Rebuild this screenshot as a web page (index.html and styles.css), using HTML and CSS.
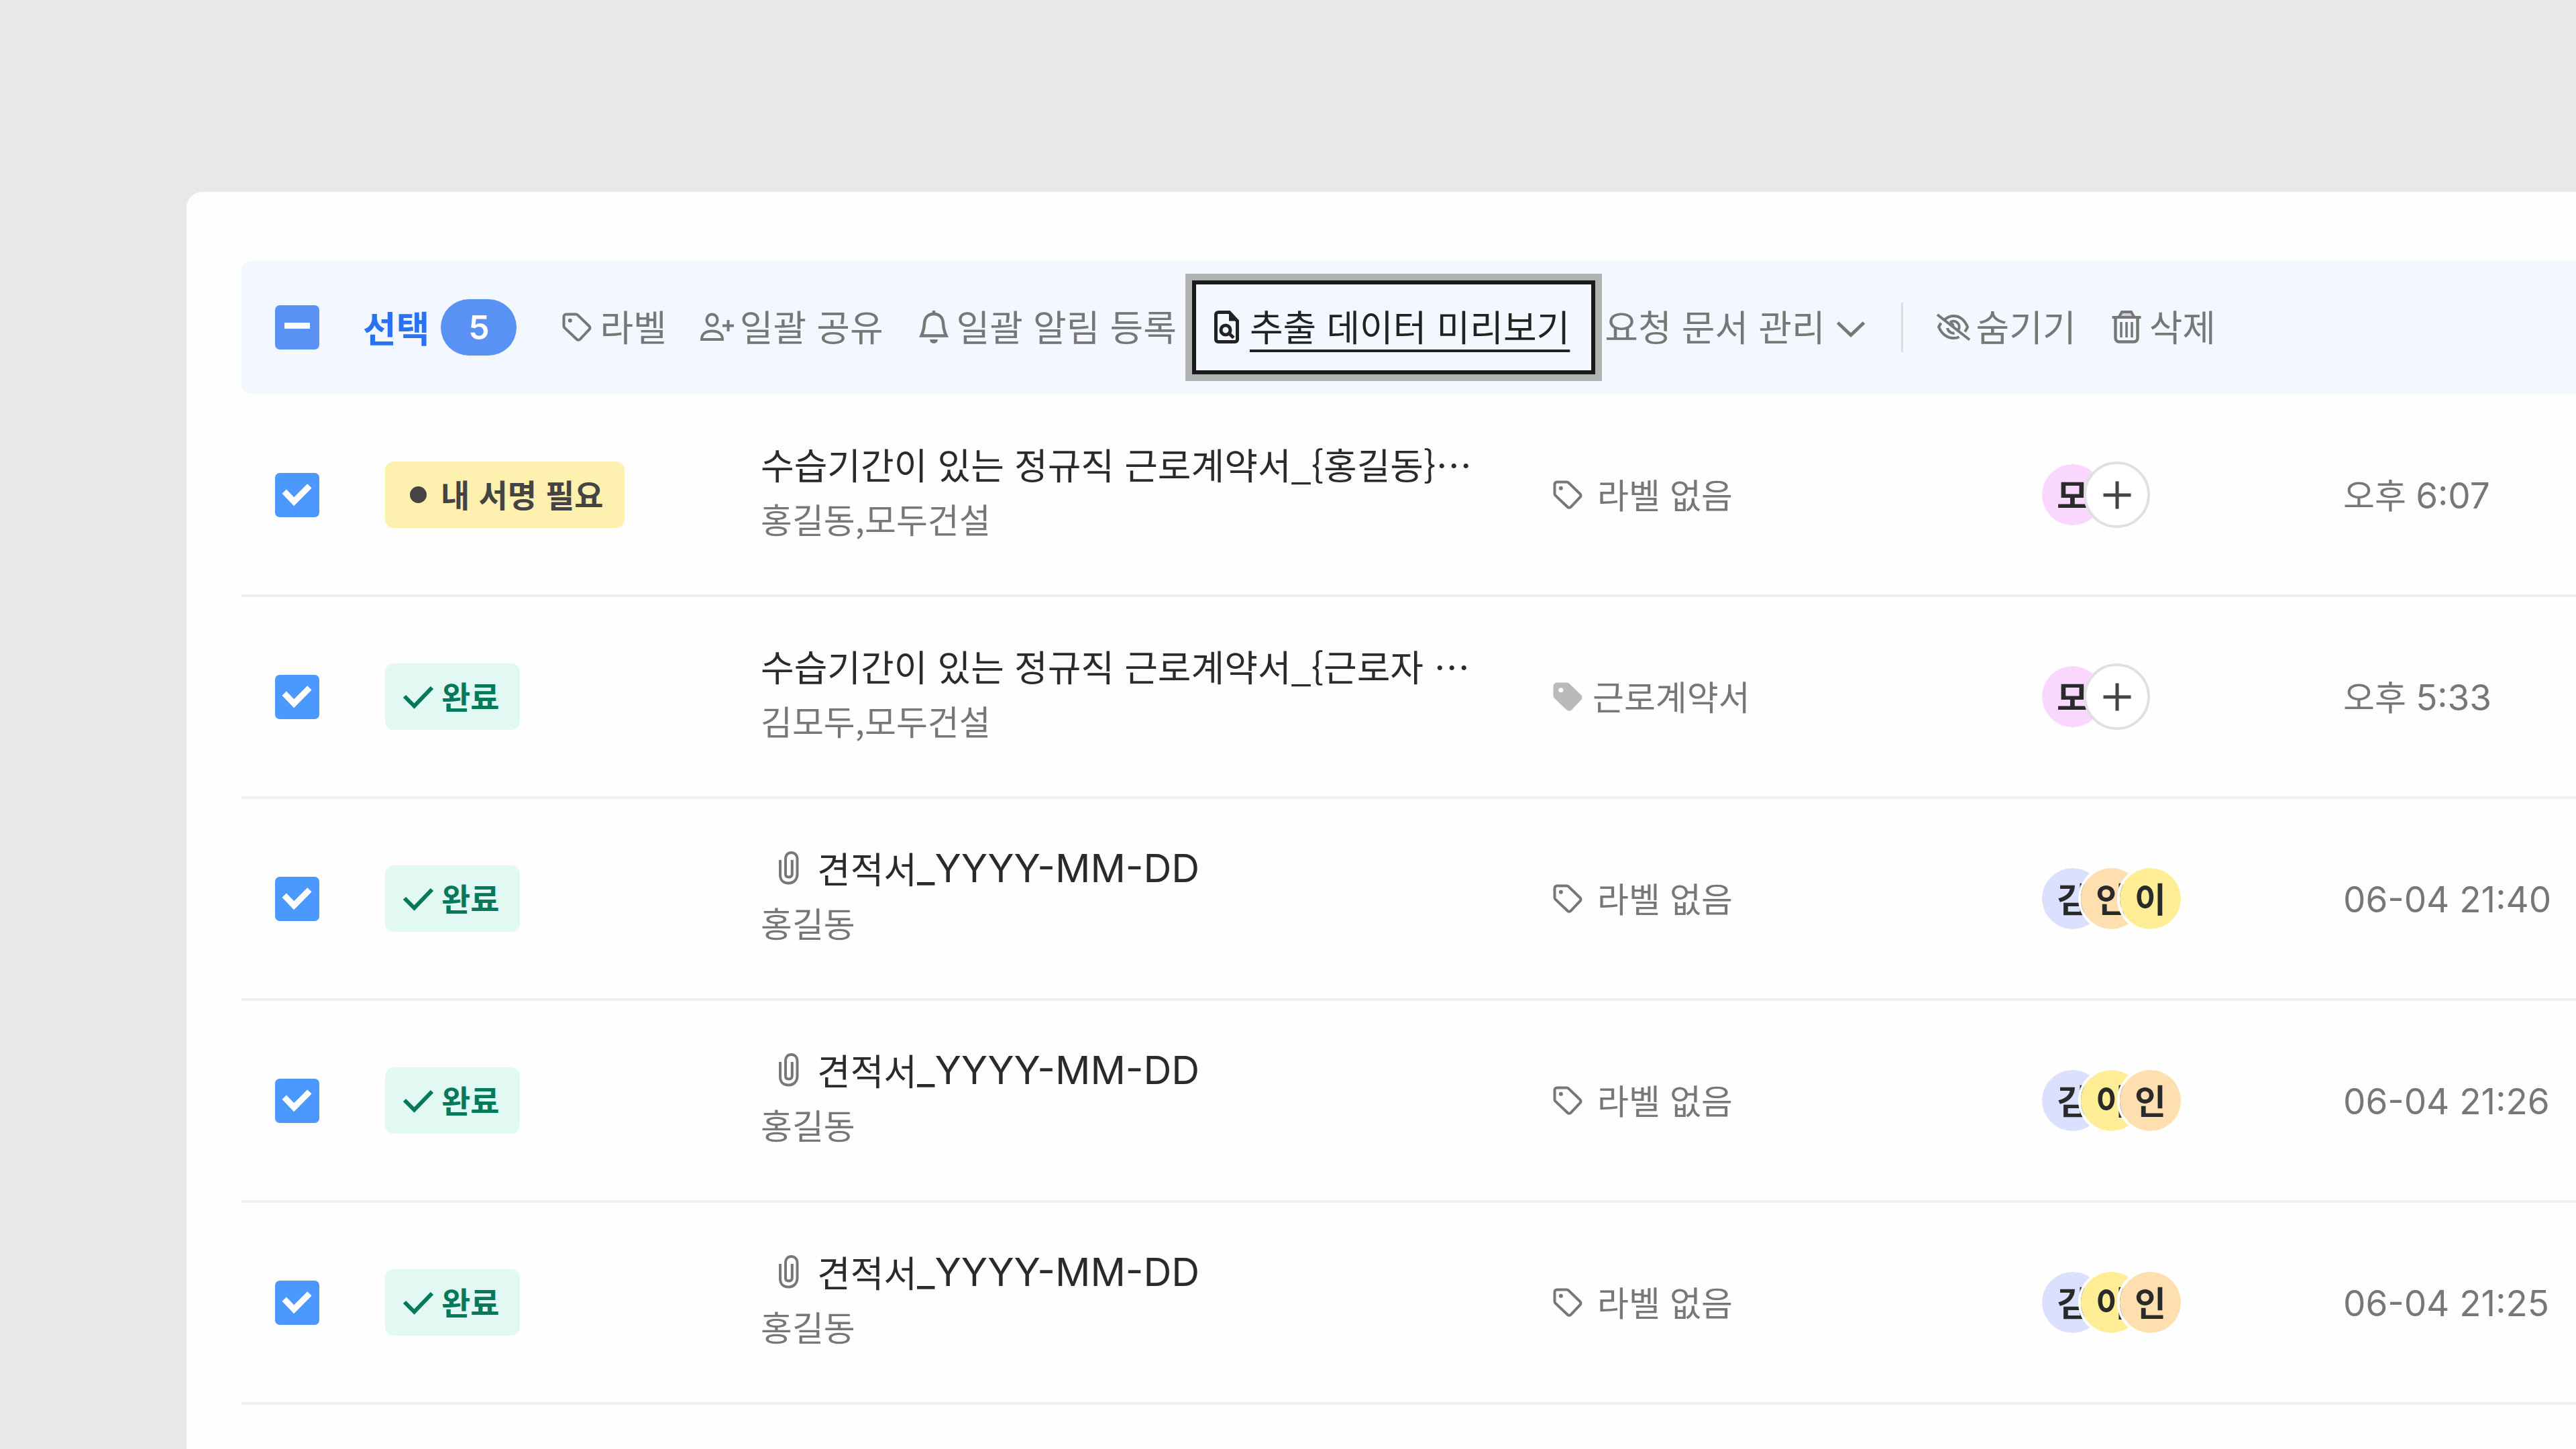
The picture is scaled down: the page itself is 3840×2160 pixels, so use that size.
FILE: index.html
```html
<!DOCTYPE html>
<html lang="ko">
<head>
    <meta charset="UTF-8">
    <meta name="viewport" content="width=device-width, initial-scale=1.0">
    <title>문서 목록</title>
    <link rel="stylesheet" href="styles.css">
</head>
<body>
    <svg class="sprite" aria-hidden="true">
        <symbol id="tag" viewBox="0 0 50 50">
            <path d="M5.5 9A3.5 3.5 0 0 1 9 5.500H23.500C24.500 5.500 25.500 5.900 26.200 6.600L43.400 23.200C44.800 24.600 44.800 26.700 43.400 28.100L29.500 42.800C28.100 44.200 26.100 44.200 24.700 42.800L6.600 25.600C5.900 24.900 5.500 23.900 5.500 22.900Z" fill="none" stroke="currentColor" stroke-width="4"/>
            <circle cx="14.800" cy="14.800" r="3" fill="currentColor"/>
        </symbol>
        <symbol id="tag-fill" viewBox="0 0 50 50">
            <path d="M5.5 9A3.5 3.5 0 0 1 9 5.500H23.500C24.500 5.500 25.500 5.900 26.200 6.600L43.400 23.200C44.800 24.600 44.800 26.700 43.400 28.100L29.500 42.800C28.100 44.200 26.100 44.200 24.700 42.800L6.600 25.600C5.900 24.900 5.500 23.900 5.500 22.900Z" fill="currentColor" stroke="currentColor" stroke-width="4"/>
            <circle cx="14.800" cy="14.800" r="3.500" fill="#fff"/>
        </symbol>
        <symbol id="user-plus" viewBox="0 0 50 50">
            <g fill="none" stroke="currentColor" stroke-width="4">
                <ellipse cx="17.500" cy="14" rx="8" ry="8.500"/>
                <path d="M2 43C2 35 7.500 30.500 17.500 30.500S33 35 33 43Z"/>
                <path d="M41.500 14V31M33 22.500H50"/>
            </g>
        </symbol>
        <symbol id="bell" viewBox="0 0 50 50">
            <path d="M25 0V5M25 5C16 5 11.500 11 11 19C10.500 28 9.500 31 6.500 37.500H43.500C40.500 31 39.500 28 39 19C38.500 11 34 5 25 5Z" fill="none" stroke="currentColor" stroke-width="4.500"/>
            <path d="M19 43H31A6 6 0 0 1 19 43Z" fill="currentColor"/>
        </symbol>
        <symbol id="doc-search" viewBox="0 0 50 50">
            <path d="M11.500 2.500H28.500L40.500 15.500V43A3.500 3.500 0 0 1 37 46.500H12A3.500 3.500 0 0 1 8.500 43V6A3.500 3.500 0 0 1 12 2.500Z" fill="none" stroke="currentColor" stroke-width="5"/>
            <path d="M28 2V15.500H42Z" fill="currentColor"/>
            <circle cx="23" cy="29" r="7" fill="none" stroke="currentColor" stroke-width="5"/>
            <path d="M27 33L35 40.500" fill="none" stroke="currentColor" stroke-width="5"/>
        </symbol>
        <symbol id="chevron" viewBox="0 0 50 50">
            <path d="M5.500 18L25 36.500L44.500 18" fill="none" stroke="currentColor" stroke-width="5"/>
        </symbol>
        <symbol id="eye-off" viewBox="0 0 50 50">
            <g fill="none" stroke="currentColor" stroke-width="4">
                <path d="M12 13.500C16 10 20 8 25 8C35 8 42 15 46 24.500C45 27 43.500 29.500 42 31.500"/>
                <path d="M6.500 18.500C5 20.500 4 22.500 3 24.500C7 34 15 41 25 41C28 41 31 40.500 33.500 39.200"/>
                <path d="M20 17.500A8.500 8.500 0 0 1 32.500 28.500"/>
                <path d="M16 26A9 9 0 0 0 26.500 33.500"/>
                <path d="M1 6L49 43.500"/>
            </g>
            <path d="M19 17.500L25 18.500L27 24L22 21Z" fill="currentColor"/>
        </symbol>
        <symbol id="trash" viewBox="0 0 50 50">
            <path d="M14 9L18 2H32L36 9" fill="#ccd0d8" stroke="currentColor" stroke-width="4"/>
            <path d="M3.500 10H46.500" stroke="currentColor" stroke-width="4"/>
            <path d="M8.500 10V41A5.500 5.500 0 0 0 14 46.500H36A5.500 5.500 0 0 0 41.500 41V10" fill="none" stroke="currentColor" stroke-width="4.500"/>
            <path d="M17 17V40M25 17V40M33 17V40" stroke="currentColor" stroke-width="3.500"/>
        </symbol>
        <symbol id="check" viewBox="0 0 50 50">
            <path d="M4 24L18.500 38.500L45 11" fill="none" stroke="currentColor" stroke-width="6"/>
        </symbol>
        <symbol id="clip" viewBox="0 0 30 50">
            <path d="M2 13V35C2 43 7 47.500 14.500 47.500S27.500 42 27.500 34V12C27.500 5.500 23.500 2 18.500 2S10 5.500 10 12V34C10 37 12 38.500 14.800 38.500S19.800 37 19.800 34V13" fill="none" stroke="currentColor" stroke-width="4"/>
        </symbol>
        <symbol id="plus" viewBox="0 0 50 50">
            <path d="M25 4.500V45.500M4.500 25H45.500" stroke="currentColor" stroke-width="5"/>
        </symbol>
    </svg>

    <main class="card">
        <div class="toolbar" role="toolbar" aria-label="선택한 문서 작업">
            <input type="checkbox" class="chk partial" id="all" aria-label="전체 선택">
            <label class="selected" for="all">선택 <span class="count">5</span></label>
            <div class="actions">
                <button class="action"><svg class="icon"><use href="#tag"/></svg>라벨</button>
                <button class="action"><svg class="icon"><use href="#user-plus"/></svg>일괄 공유</button>
                <button class="action"><svg class="icon"><use href="#bell"/></svg>일괄 알림 등록</button>
                <button class="action focused"><svg class="icon"><use href="#doc-search"/></svg><span class="underlined">추출 데이터 미리보기</span></button>
                <button class="action menu">요청 문서 관리<svg class="icon"><use href="#chevron"/></svg></button>
                <span class="divider"></span>
                <button class="action"><svg class="icon"><use href="#eye-off"/></svg>숨기기</button>
                <button class="action"><svg class="icon"><use href="#trash"/></svg>삭제</button>
            </div>
        </div>

        <table class="docs">
            <colgroup>
                <col class="col-check">
                <col class="col-status">
                <col class="col-title">
                <col class="col-label">
                <col class="col-people">
                <col class="col-date">
            </colgroup>
            <tbody>
                <tr>
                    <td class="check"><input type="checkbox" class="chk" checked aria-label="문서 선택"></td>
                    <td><span class="status need"><span class="dot"></span>내 서명 필요</span></td>
                    <td>
                        <a href="#" class="title">수습기간이 있는 정규직 근로계약서_{홍길동}…</a>
                        <p class="people">홍길동,모두건설</p>
                    </td>
                    <td><span class="label none"><svg class="icon"><use href="#tag"/></svg>라벨 없음</span></td>
                    <td><div class="avatars"><span class="avatar pink">모</span><button class="add" aria-label="참여자 추가"><svg class="icon"><use href="#plus"/></svg></button></div></td>
                    <td class="date">오후 <span class="num">6:07</span></td>
                </tr>
                <tr>
                    <td class="check"><input type="checkbox" class="chk" checked aria-label="문서 선택"></td>
                    <td><span class="status done"><svg class="icon"><use href="#check"/></svg>완료</span></td>
                    <td>
                        <a href="#" class="title">수습기간이 있는 정규직 근로계약서_{근로자 …</a>
                        <p class="people">김모두,모두건설</p>
                    </td>
                    <td><span class="label"><svg class="icon"><use href="#tag-fill"/></svg>근로계약서</span></td>
                    <td><div class="avatars"><span class="avatar pink">모</span><button class="add" aria-label="참여자 추가"><svg class="icon"><use href="#plus"/></svg></button></div></td>
                    <td class="date">오후 <span class="num">5:33</span></td>
                </tr>
                <tr>
                    <td class="check"><input type="checkbox" class="chk" checked aria-label="문서 선택"></td>
                    <td><span class="status done"><svg class="icon"><use href="#check"/></svg>완료</span></td>
                    <td>
                        <a href="#" class="title"><svg class="clip"><use href="#clip"/></svg>견적서<span class="latin">_YYYY-MM-DD</span></a>
                        <p class="people">홍길동</p>
                    </td>
                    <td><span class="label none"><svg class="icon"><use href="#tag"/></svg>라벨 없음</span></td>
                    <td><div class="avatars"><span class="avatar blue">김</span><span class="avatar orange">인</span><span class="avatar yellow">이</span></div></td>
                    <td class="date"><span class="num">06-04 21:40</span></td>
                </tr>
                <tr>
                    <td class="check"><input type="checkbox" class="chk" checked aria-label="문서 선택"></td>
                    <td><span class="status done"><svg class="icon"><use href="#check"/></svg>완료</span></td>
                    <td>
                        <a href="#" class="title"><svg class="clip"><use href="#clip"/></svg>견적서<span class="latin">_YYYY-MM-DD</span></a>
                        <p class="people">홍길동</p>
                    </td>
                    <td><span class="label none"><svg class="icon"><use href="#tag"/></svg>라벨 없음</span></td>
                    <td><div class="avatars"><span class="avatar blue">김</span><span class="avatar yellow">이</span><span class="avatar orange">인</span></div></td>
                    <td class="date"><span class="num">06-04 21:26</span></td>
                </tr>
                <tr>
                    <td class="check"><input type="checkbox" class="chk" checked aria-label="문서 선택"></td>
                    <td><span class="status done"><svg class="icon"><use href="#check"/></svg>완료</span></td>
                    <td>
                        <a href="#" class="title"><svg class="clip"><use href="#clip"/></svg>견적서<span class="latin">_YYYY-MM-DD</span></a>
                        <p class="people">홍길동</p>
                    </td>
                    <td><span class="label none"><svg class="icon"><use href="#tag"/></svg>라벨 없음</span></td>
                    <td><div class="avatars"><span class="avatar blue">김</span><span class="avatar yellow">이</span><span class="avatar orange">인</span></div></td>
                    <td class="date"><span class="num">06-04 21:25</span></td>
                </tr>
            </tbody>
        </table>
    </main>
    <script>
        document.getElementById("all").indeterminate = true;
    </script>
</body>
</html>
```

FILE: styles.css
```css
* {
    box-sizing: border-box;
}
body {
    margin: 0;
    min-height: 100vh;
    padding: 286px 0 0 278px;
    display: flex;
    background: #e8e8e8;
    color: #2a2a2a;
    font-family: "Noto Sans CJK KR", Inter, sans-serif;
    font-size: 51px;
    line-height: 80px;
}
button {
    border: 0;
    padding: 0;
    background: none;
    font: inherit;
    color: inherit;
    cursor: pointer;
}
.sprite {
    position: absolute;
    width: 0;
    height: 0;
}
.icon {
    flex: none;
    width: 50px;
    height: 50px;
}
.card {
    flex: 1;
    min-width: 0;
    padding: 103px 0 0 82px;
    background: #fefefe;
    border-radius: 24px 0 0 0;
}

/* toolbar */
.toolbar {
    display: flex;
    align-items: center;
    height: 198px;
    margin-bottom: 2px;
    padding-left: 50px;
    background: #f3f7ff;
    border-radius: 14px 0 0 14px;
    font-size: 54px;
    color: #777;
    white-space: nowrap;
}
.chk {
    appearance: none;
    display: block;
    flex: none;
    width: 66px;
    height: 66px;
    margin: 0;
    border-radius: 7px;
    background: #4b98ff url('data:image/svg+xml,<svg xmlns="http://www.w3.org/2000/svg" viewBox="0 0 66 66"><path d="M13.700 27.700L28.200 42.700L51.400 19.300" fill="none" stroke="white" stroke-width="9"/></svg>');
}
.chk.partial {
    background: #5a91f4 url('data:image/svg+xml,<svg xmlns="http://www.w3.org/2000/svg" viewBox="0 0 66 66"><path d="M14 30.500H52" stroke="white" stroke-width="9"/></svg>');
}
.selected {
    display: flex;
    align-items: center;
    gap: 17px;
    margin: 0 65px;
    color: #2a72f0;
    font-weight: 700;
}
.count {
    width: 113px;
    border-radius: 42px;
    line-height: 84px;
    background: #5a91f4;
    color: #fff;
    font-family: Inter, sans-serif;
    font-size: 50px;
    font-weight: 600;
    text-align: center;
}
.actions {
    display: flex;
    align-items: center;
    gap: 50px;
}
.action {
    display: flex;
    align-items: center;
    gap: 9px;
}
/* hangul sits low in its line box, so the text is lifted against the icon */
.action, .status, .label {
    padding-bottom: 4px;
}
.action .icon, .status .icon, .label .icon {
    margin-top: 4px;
}
.action.menu {
    gap: 13px;
}
.action.focused {
    height: 140px;
    margin: 0 -36px 0 -27px;
    padding: 0 32px 4px 21px;
    border: 6px solid #1a1a1a;
    box-shadow: 0 0 0 10px #b2b2b2;
    color: #222;
}
.underlined {
    text-decoration: underline;
    text-decoration-thickness: 4px;
    text-underline-offset: 12px;
}
.divider {
    width: 3px;
    height: 74px;
    background: #ddd;
}

/* document list */
.docs {
    width: 100%;
    table-layout: fixed;
    border-collapse: separate;
    border-spacing: 0;
}
.col-check { width: 214px; }
.col-status { width: 560px; }
.col-label { width: 728px; }
.col-people { width: 453px; }
.col-date { width: 347px; }
.docs td {
    height: 301px;
    padding: 0;
    border-bottom: 4px solid #efefef;
    vertical-align: middle;
    white-space: nowrap;
}
.docs .check {
    padding-left: 50px;
}
.status {
    display: inline-flex;
    align-items: center;
    gap: 9px;
    height: 99px;
    padding: 0 31px 4px 25px;
    border-radius: 13px;
    vertical-align: middle;
    font-size: 47px;
    font-weight: 700;
}
.status.need {
    background: #fef1b0;
    color: #444;
}
.status.done {
    background: #e2f9f3;
    color: #06795a;
}
.dot {
    width: 25px;
    height: 25px;
    margin: 4px 12px 0;
    border-radius: 50%;
    background: #444;
}
.title {
    display: flex;
    align-items: center;
    font-size: 54px;
    line-height: 82px;
    color: inherit;
    text-decoration: none;
}
.latin {
    font-family: Inter, sans-serif;
    font-size: 58px;
    font-feature-settings: "case";
}
.clip {
    width: 30px;
    height: 50px;
    margin: 0 27px;
    color: #777;
}
.people {
    margin: 0 0 12px;
    color: #777;
}
.label {
    display: flex;
    align-items: center;
    gap: 12px;
    color: #777;
}
.label.none {
    gap: 19px;
}
.label:not(.none) .icon {
    color: #bababa;
}
.avatars {
    display: flex;
}
.avatar, .add {
    width: 99px;
    height: 99px;
    border: 4px solid #fff;
    border-radius: 50%;
    line-height: 88px;
    font-weight: 700;
    text-align: center;
    background-clip: padding-box;
}
.avatar + .avatar {
    margin-left: -41px;
}
.add {
    display: flex;
    align-items: center;
    justify-content: center;
    margin-left: -33px;
    border-color: #e0e0e0;
    background: #fff;
    color: #444;
}
.pink { background-color: #f9d7ff; }
.blue { background-color: #dce0ff; }
.orange { background-color: #ffdfb0; }
.yellow { background-color: #ffee96; }
.date {
    color: #777;
}
.num {
    font-family: Inter, sans-serif;
    font-size: 53px;
    font-feature-settings: "case";
}
```
